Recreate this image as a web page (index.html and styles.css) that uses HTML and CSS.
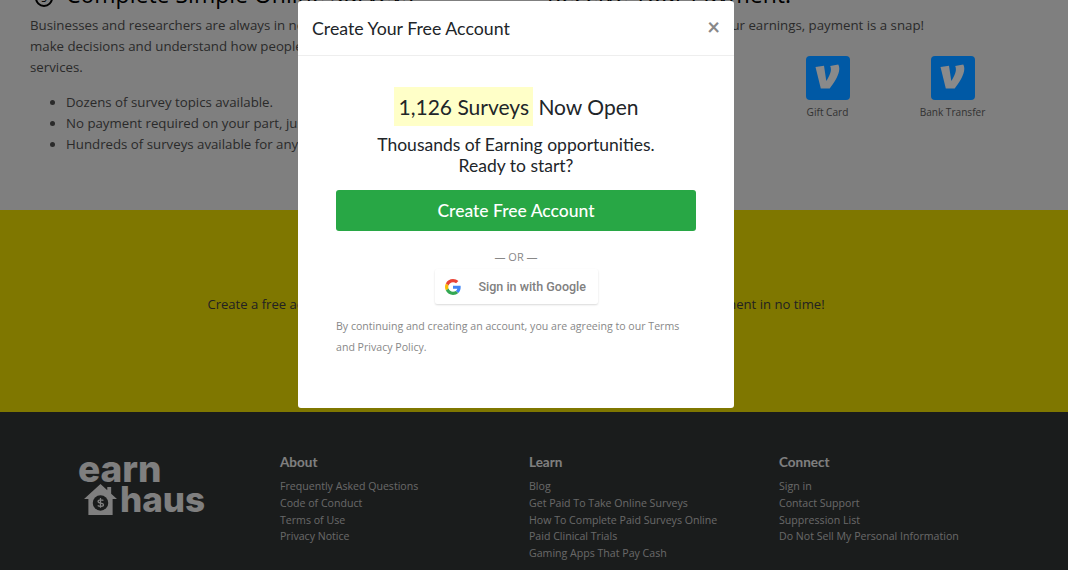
FILE: index.html
```html
<!DOCTYPE html>
<html lang="en">
<head>
<meta charset="utf-8">
<title>Earnhaus</title>
<link rel="stylesheet" href="styles.css">
</head>
<body>
<div class="page">
  <section class="steps">
    <div class="step step-left">
      <h3 class="step-title"><span class="step-num">3</span>Complete Simple Online Surveys</h3>
      <p class="step-text">Businesses and researchers are always in need of your opinions to help them<br>make decisions and understand how people feel about their products and<br>services.</p>
      <ul class="step-list">
        <li>Dozens of survey topics available.</li>
        <li>No payment required on your part, just your time.</li>
        <li>Hundreds of surveys available for any interests.</li>
      </ul>
    </div>
    <div class="step step-right">
      <h3 class="step-title step-title-right">Receive Your Payment!</h3>
      <p class="step-text">Once you have accumulated your earnings, payment is a snap!</p>
      <div class="payouts">
        <div class="payout">
          <svg class="venmo" viewBox="0 0 44 44"><rect width="44" height="44" rx="4" fill="#0059a5"/><path d="M9.500 11l8.500-1.300 2.300 15.300c2.200-3.500 4.600-8.300 4.600-11.300 0-1.600-.3-2.700-.7-3.600l8-1.600c.8 1.300 1.100 2.700 1.100 4.500 0 6-5.300 14-9.600 19.500H14.800z" fill="#8a8a8a"/></svg>
          <span class="payout-label">Gift Card</span>
        </div>
        <div class="payout">
          <svg class="venmo" viewBox="0 0 44 44"><rect width="44" height="44" rx="4" fill="#0059a5"/><path d="M9.500 11l8.500-1.300 2.300 15.300c2.200-3.500 4.600-8.300 4.600-11.300 0-1.600-.3-2.700-.7-3.600l8-1.600c.8 1.300 1.100 2.700 1.100 4.500 0 6-5.300 14-9.600 19.500H14.800z" fill="#8a8a8a"/></svg>
          <span class="payout-label">Bank Transfer</span>
        </div>
      </div>
    </div>
  </section>
  <section class="cta">
    <p class="cta-text">Create a free account, answer a few simple questions and start earning your first payment in no time!</p>
  </section>
  <footer class="footer">
    <div class="logo">
      <span class="logo-line">earn</span>
      <span class="logo-row">
        <svg class="logo-house" viewBox="0 0 34 32"><path d="M17 0L0 15.500h4.500V32h25V15.500H34L28 10V3h-4v3.400z" fill="#fff"/><circle cx="17" cy="19.500" r="8" fill="#353838"/><path d="M20 17c-1-.9-5.500-1.300-5.500 1 0 2.400 5.600 1.100 5.600 3.400 0 2.300-4.800 1.900-6 .9M17 14.500v10" fill="none" stroke="#fff" stroke-width="1.300"/></svg>
        <span class="logo-line logo-haus">haus</span>
      </span>
    </div>
    <div class="foot-col foot-about">
      <h4>About</h4>
      <a>Frequently Asked Questions</a>
      <a>Code of Conduct</a>
      <a>Terms of Use</a>
      <a>Privacy Notice</a>
    </div>
    <div class="foot-col foot-learn">
      <h4>Learn</h4>
      <a>Blog</a>
      <a>Get Paid To Take Online Surveys</a>
      <a>How To Complete Paid Surveys Online</a>
      <a>Paid Clinical Trials</a>
      <a>Gaming Apps That Pay Cash</a>
    </div>
    <div class="foot-col">
      <h4>Connect</h4>
      <a>Sign in</a>
      <a>Contact Support</a>
      <a>Suppression List</a>
      <a>Do Not Sell My Personal Information</a>
    </div>
  </footer>
</div>
<div class="backdrop"></div>
<div class="modal">
  <div class="modal-head">
    <span class="modal-title">Create Your Free Account</span>
    <span class="modal-close">×</span>
  </div>
  <div class="modal-body">
    <div class="count"><mark class="count-mark">1,126 Surveys</mark> Now Open</div>
    <p class="lead">Thousands of Earning opportunities.<br>Ready to start?</p>
    <button class="primary">Create Free Account</button>
    <div class="or">— OR —</div>
    <div class="google">
      <svg class="g-icon" viewBox="0 0 48 48"><path fill="#ea4335" d="M24 9.500c3.500 0 6.700 1.200 9.200 3.600l6.900-6.900C35.900 2.400 30.500 0 24 0 14.600 0 6.500 5.400 2.600 13.200l8 6.200C12.400 13.700 17.700 9.500 24 9.500z"/><path fill="#4285f4" d="M47 24.500c0-1.600-.1-3.100-.4-4.500H24v9h12.900c-.6 3-2.200 5.500-4.800 7.200l7.700 6c4.500-4.200 7.200-10.300 7.200-17.700z"/><path fill="#fbbc05" d="M10.600 28.600c-.5-1.400-.8-3-.8-4.600s.3-3.200.8-4.600l-8-6.200C.9 16.500 0 20.100 0 24s.9 7.500 2.600 10.800z"/><path fill="#34a853" d="M24 48c6.500 0 11.900-2.100 15.800-5.800l-7.700-6c-2.100 1.400-4.900 2.300-8.100 2.300-6.300 0-11.600-4.200-13.400-9.900l-8 6.200C6.500 42.600 14.600 48 24 48z"/></svg>
      <span>Sign in with Google</span>
    </div>
    <p class="terms">By continuing and creating an account, you are agreeing to our Terms and Privacy Policy.</p>
  </div>
</div>
</body>
</html>
```
FILE: styles.css
```css
* { box-sizing: border-box; }
html, body { margin: 0; height: 570px; overflow: hidden; }
body { font-family: "Open Sans", "Noto Sans", sans-serif; color: #555; background: #fff; }
.page { display: flex; flex-direction: column; height: 570px; overflow: hidden; }
.steps { height: 210px; flex: none; display: flex; background: #fff; overflow: hidden; padding-left: 30px; }
.step-left { width: 509px; flex: none; }
.step-right { flex: 1; }
.step-title { margin: -22px 0 5px; font-size: 23px; line-height: 32px; font-weight: 500; color: #000; white-space: nowrap; }
.step-title-right { margin-left: 8px; }
.step-num { display: inline-block; width: 18px; height: 18px; margin: 0 13px 0 5px; border: 2px solid #000; border-radius: 50%; font-size: 10px; line-height: 14px; text-align: center; vertical-align: 1px; }
.step-text { margin: 0; font-size: 13.250px; line-height: 21px; white-space: nowrap; }
.step-list { margin: 14px 0 0; padding-left: 36px; font-size: 13.250px; line-height: 21px; white-space: nowrap; }
.payouts { display: flex; margin: 20px 0 0 226px; }
.payout { width: 125px; display: flex; flex-direction: column; align-items: center; }
.venmo { width: 44px; height: 44px; display: block; position: relative; z-index: 2; }
.payout-label { margin-top: 5px; font-size: 10.100px; line-height: 14px; white-space: nowrap; color: #666; }
.cta { height: 202px; flex: none; background: #ffee00; display: flex; justify-content: center; padding: 85px 36px 0 0; }
.cta-text { margin: 0; font-size: 13.100px; line-height: 18px; white-space: nowrap; color: #444; }
.footer { flex: 1; background: #353838; display: flex; padding: 41px 0 0 78px; color: #fff; }
.logo { width: 202px; display: flex; flex-direction: column; font-family: Inter, sans-serif; font-weight: 800; font-size: 37px; line-height: 31px; }
.logo-row { display: flex; align-items: flex-end; gap: 3px; padding-left: 6px; }
.logo-house { width: 33px; height: 31px; flex: none; }
.logo-line { display: block; color: #fff; }
.logo-haus { font-size: 35px; }
.foot-col { display: flex; flex-direction: column; }
.foot-about { width: 249px; }
.foot-learn { width: 250px; }
.foot-col h4 { margin: 0 0 7px; font-family: Lato, sans-serif; font-size: 13.500px; line-height: 18px; font-weight: 700; color: #fff; }
.foot-col a { font-size: 10.600px; line-height: 16.800px; color: #d0d0d0; white-space: nowrap; }
.backdrop { position: fixed; inset: 0; z-index: 1; background: rgba(0, 0, 0, .5); }
.modal { position: fixed; left: 298px; top: 1px; z-index: 3; width: 436px; height: 407px; background: #fff; border-radius: 3px; font-family: Lato, sans-serif; }
.modal-head { height: 55px; display: flex; align-items: center; justify-content: space-between; padding: 0 14px; border-bottom: 1px solid #eee; }
.modal-title { font-size: 17.750px; color: #212529; }
.modal-close { font-size: 22px; font-weight: 700; color: #888; line-height: 1; margin-top: -3px; }
.modal-body { padding: 31px 38px 0; display: flex; flex-direction: column; }
.count { text-align: center; font-size: 21px; line-height: 39px; color: #212529; }
.count-mark { background: #ffffc8; color: #212529; padding: 0 4px 0 5px; display: inline-block; }
.lead { margin: 8px 0 0; text-align: center; font-size: 17.500px; line-height: 21px; color: #212529; }
.primary { margin-top: 14px; height: 41px; padding: 0 0 1px; border: 0; border-radius: 3px; background: #28a745; color: #fff; font-family: Lato, sans-serif; font-size: 17.500px; font-weight: 500; }
.or { margin-top: 19px; text-align: center; font-size: 11px; line-height: 14px; color: #888; font-family: "Open Sans", sans-serif; }
.google { align-self: center; margin-top: 5px; width: 163px; height: 35px; display: flex; align-items: center; gap: 18px; padding-left: 10px; box-shadow: 0 1px 2px rgba(0,0,0,.15); border-radius: 2px; font-family: Roboto, sans-serif; font-size: 12.500px; font-weight: 500; color: #808080; }
.g-icon { width: 16px; height: 16px; flex: none; }
.terms { margin: 12px 0 0; font-family: "Open Sans", sans-serif; font-size: 10.600px; line-height: 21px; color: #888; }
```
